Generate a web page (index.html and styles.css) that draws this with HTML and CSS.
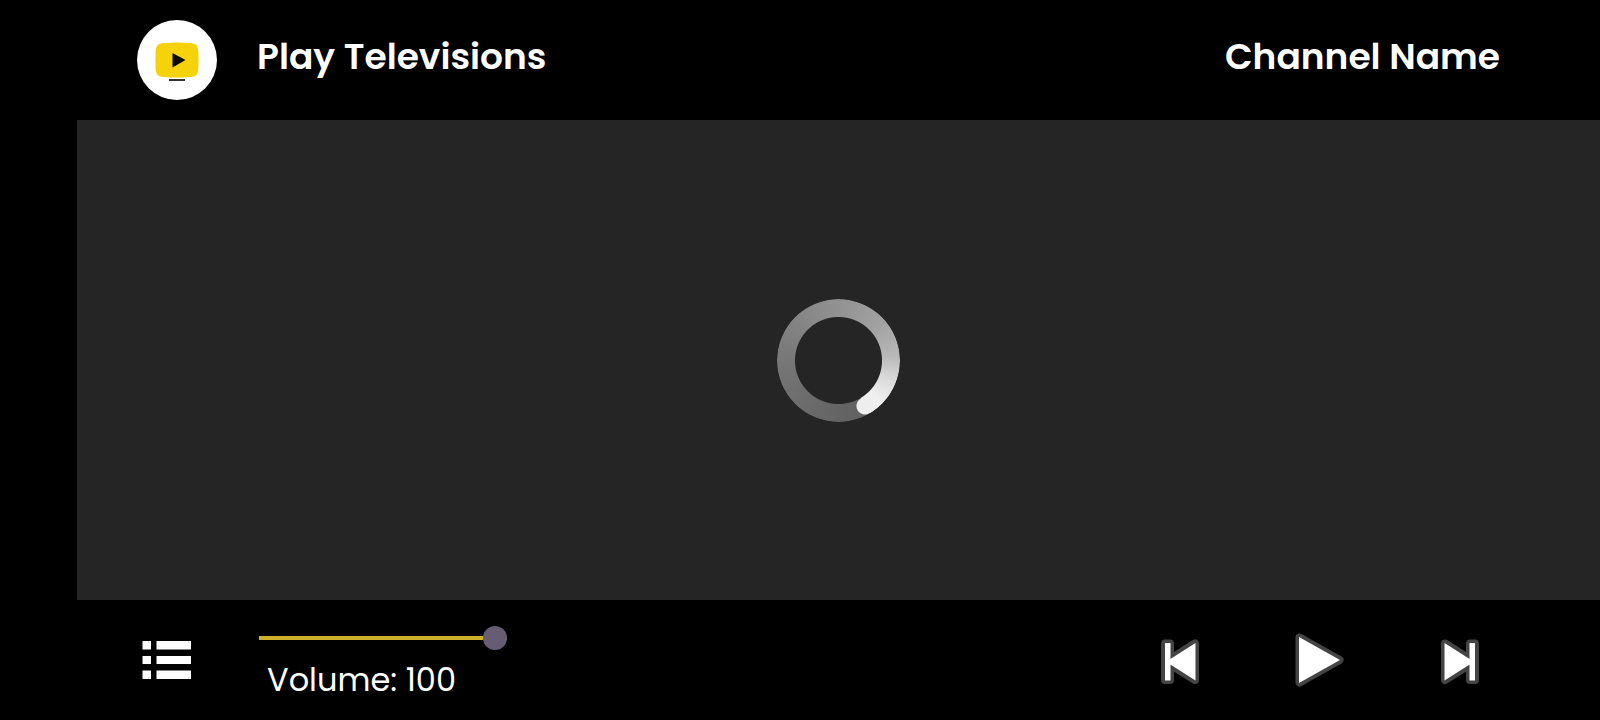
FILE: index.html
```html
<!DOCTYPE html>
<html lang="en">
<head>
    <meta charset="UTF-8">
    <meta name="viewport" content="width=device-width, initial-scale=1.0">
    <title>Play Televisions</title>
    <link rel="stylesheet" href="styles.css">
</head>
<body>
    <header class="top-bar">
        <svg class="logo" viewBox="0 0 80 80" aria-hidden="true">
            <circle cx="40" cy="40" r="40" fill="#fff"/>
            <path d="M26 23Q40 22 54 23Q61 23.500 61.300 30Q62 40 61.300 50Q61 56.500 54 57Q40 58 26 57Q19 56.500 18.700 50Q18 40 18.700 30Q19 23.500 26 23Z" fill="#f5d20a"/>
            <path d="M35.500 33L48.500 40L35.500 47.500Z" fill="#0a0a00"/>
            <rect x="32" y="59" width="16" height="2" fill="#333"/>
        </svg>
        <h1 class="title">Play Televisions</h1>
        <h2 class="title">Channel Name</h2>
    </header>

    <main class="player">
        <div class="spinner" role="status" aria-label="Loading"></div>
    </main>

    <footer class="controls">
        <button class="list-btn" aria-label="Channel list">
            <svg width="50" height="40" viewBox="0 0 50 40" fill="#fff">
                <path d="M.5 1H9v8.500H.5zM14.500 1H49v8.500H14.500zM.5 16H9v8H.5zM14.500 16H49v8H14.500zM.5 30.500H9V39H.5zM14.500 30.500H49V39H14.500z"/>
            </svg>
        </button>

        <div class="volume">
            <input type="range" id="volume" min="0" max="100" value="100">
            <label for="volume">Volume: <span id="volumeValue">100</span></label>
        </div>

        <div class="buttons">
            <button aria-label="Previous channel">
                <svg width="40" height="60" viewBox="0 0 40 60">
                    <path class="edge" d="M5 13.500h5v36.500h-5zM6 31.750L35 13.500v36.500z"/>
                    <path d="M5 13h5.500v37.500h-5.500zM6 31.750L35.500 13v37.500z" fill="#fff"/>
                </svg>
            </button>
            <button aria-label="Play">
                <svg width="50" height="60" viewBox="0 0 50 60">
                    <path class="edge" d="M4.500 7.500L44.500 30L4.500 52.500z"/>
                    <path d="M4 7L45 30L4 53z" fill="#fff"/>
                </svg>
            </button>
            <button aria-label="Next channel">
                <svg width="40" height="60" viewBox="0 0 40 60">
                    <path class="edge" d="M30 13.500h5v36.500h-5zM34 31.750L5 50v-36.500z"/>
                    <path d="M29.500 13h5.500v37.500h-5.500zM34 31.750L4.500 50.500v-37.500z" fill="#fff"/>
                </svg>
            </button>
        </div>
    </footer>

    <script>
    const volume = document.getElementById('volume');

    volume.addEventListener('input', () => {
        document.getElementById('volumeValue').textContent = volume.value;
        volume.style.setProperty('--level', volume.value + '%');
    });
    </script>
</body>
</html>
```
FILE: styles.css
```css
* {
    box-sizing: border-box;
}

body {
    display: grid;
    grid-template-rows: 120px 1fr 120px;
    min-height: 100vh;
    margin: 0;
    padding-left: 77px;
    background-color: #000;
    color: #fff;
    font-family: Poppins, Inter, sans-serif;
}

.top-bar {
    display: flex;
    align-items: center;
    gap: 40px;
    padding: 0 100px 0 60px;
}

.logo {
    width: 80px;
    height: 80px;
}

.title {
    margin: 0;
    padding-bottom: 6px;
    font-size: 36px;
    line-height: 48px;
    font-weight: 600;
}

h2.title {
    margin-left: auto;
}

.player {
    display: flex;
    align-items: center;
    justify-content: center;
    background-color: #252525;
}

/* ring is cut out of the gradient, the round end is drawn on top */
.spinner {
    width: 123px;
    height: 123px;
    border-radius: 50%;
    background:
        radial-gradient(circle at 88px 107px, #eee 8px, transparent 9px),
        conic-gradient(#929292, #a2a2a2 50deg, #b8b8b8 85deg, #dadada 110deg, #f0f0f0 135deg, #eee 149deg, #606060 149deg, #666 190deg, #777 270deg, #929292);
    -webkit-mask: radial-gradient(circle, transparent 43px, #000 44px);
    mask: radial-gradient(circle, transparent 43px, #000 44px);
}

.controls {
    display: flex;
    align-items: center;
    padding: 0 120px 0 65px;
}

button {
    display: flex;
    padding: 0;
    background: none;
    border: none;
    cursor: pointer;
}

.volume {
    display: flex;
    flex-direction: column;
    gap: 10px;
    width: 248px;
    margin-left: 67px;
    padding-top: 6px;
}

.volume label {
    padding-left: 8px;
    font-size: 32px;
    line-height: 40px;
    white-space: nowrap;
}

input[type="range"] {
    --level: 100%;
    -webkit-appearance: none;
    appearance: none;
    width: 100%;
    height: 24px;
    margin: 0;
    background: linear-gradient(#ceb02d, #ceb02d) left center / var(--level) 4px no-repeat;
    cursor: pointer;
}

input[type="range"]::-webkit-slider-thumb {
    -webkit-appearance: none;
    width: 24px;
    height: 24px;
    border-radius: 50%;
    background-color: #665c74;
}

.buttons {
    display: flex;
    align-items: center;
    gap: 95px;
    margin-left: auto;
}

.buttons svg {
    overflow: visible;
}

.edge {
    fill: #444;
    stroke: #444;
    stroke-width: 8px;
    stroke-linejoin: round;
}
```
